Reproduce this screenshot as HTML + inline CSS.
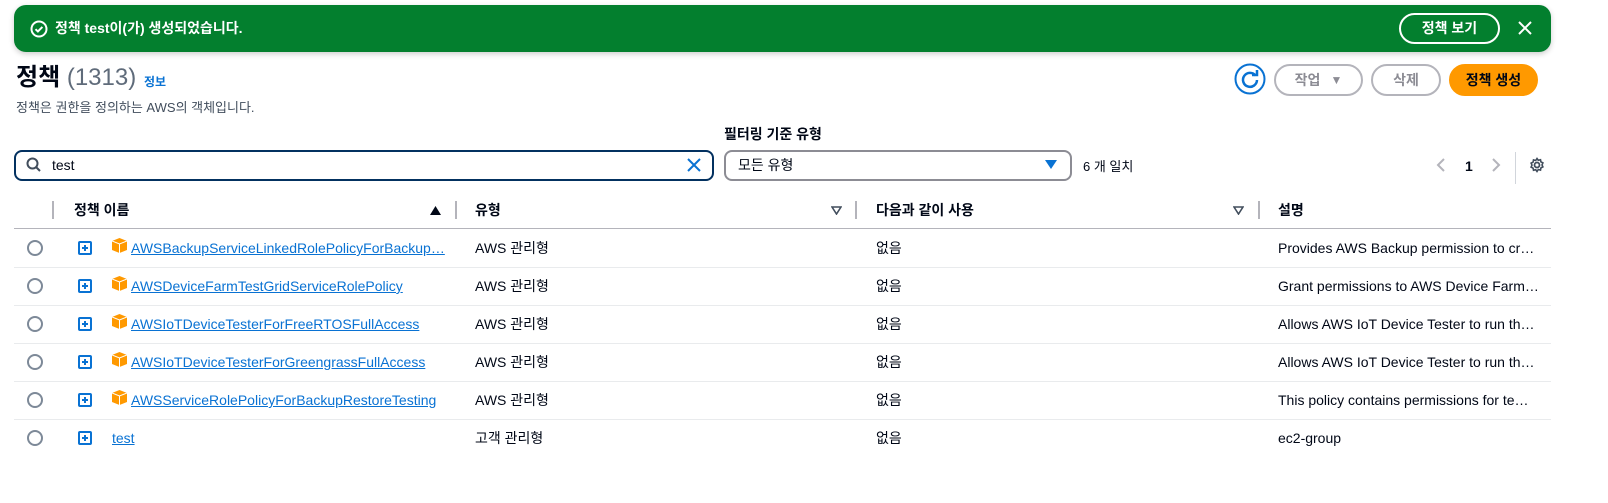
<!DOCTYPE html>
<html><head><meta charset="utf-8"><style>
*{box-sizing:border-box;margin:0;padding:0}
body{width:1608px;height:503px;background:#fff;font-family:"Liberation Sans","Noto Sans CJK KR",sans-serif;color:#000716;font-size:14px;line-height:17px;position:relative;overflow:hidden}
.a{position:absolute}
.flash{left:14px;top:5px;width:1537px;height:47px;background:#037f2e;border-radius:12px;box-shadow:0 2px 6px rgba(0,0,0,.2)}
.btn{position:absolute;border-radius:16px;border:2px solid #b4b4bb;color:#8c8c94;font-weight:bold;display:flex;align-items:center;justify-content:center;font-size:14px}
.hd{position:absolute;top:202px;font-weight:bold;font-size:14px}
.sep{position:absolute;top:201px;width:2px;height:18px;background:#b4b4bb}
.row{position:absolute;left:14px;width:1537px;height:1px;background:#e9ebed}
.rd{position:absolute;left:27px;width:16px;height:16px;border:2px solid #7d8998;border-radius:50%}
.pl{position:absolute;left:78px;width:14px;height:14px;border:2px solid #0972d3;border-radius:2px}
.pl:before{content:"";position:absolute;left:2px;top:4px;width:6px;height:2px;background:#0972d3}
.pl:after{content:"";position:absolute;left:4px;top:2px;width:2px;height:6px;background:#0972d3}
.cube{position:absolute;left:112px;width:15px;height:15px}
.lk{position:absolute;left:131px;color:#0972d3;text-decoration:underline;font-size:14px}
.c{position:absolute;font-size:14px}
</style></head><body>
<div class="a flash"></div>
<svg class="a" style="left:30px;top:20px" width="18" height="18" viewBox="0 0 18 18"><circle cx="9" cy="9" r="7.5" fill="none" stroke="#fff" stroke-width="2"/><path d="M5.5 9.2l2.4 2.3 4.5-4.6" fill="none" stroke="#fff" stroke-width="2"/></svg>
<div class="a" style="left:55px;top:20px;color:#fff;font-weight:bold;font-size:14px">정책 test이(가) 생성되었습니다.</div>
<div class="a" style="left:1399px;top:13px;width:101px;height:31px;border:2px solid #fff;border-radius:16px;color:#fff;font-weight:bold;display:flex;align-items:center;justify-content:center">정책 보기</div>
<svg class="a" style="left:1518px;top:21px" width="14" height="14"><path d="M1 1L13 13M13 1L1 13" stroke="#fff" stroke-width="2"/></svg>

<div class="a" style="left:16px;top:64px;font-size:24px;line-height:28px;font-weight:bold">정책 <span style="font-weight:normal;color:#5f6b7a">(1313)</span></div>
<div class="a" style="left:144px;top:74px;font-size:12px;color:#0972d3;font-weight:bold">정보</div>
<div class="a" style="left:16px;top:99px;font-size:13px;color:#414d5c">정책은 권한을 정의하는 AWS의 객체입니다.</div>

<svg class="a" style="left:1234px;top:63px" width="32" height="32" viewBox="0 0 32 32"><circle cx="16" cy="16" r="14.5" fill="none" stroke="#0972d3" stroke-width="2"/><path d="M21.5 12.5A7 7 0 1 0 23 17" fill="none" stroke="#0972d3" stroke-width="2.5"/><path d="M18 12h5V7" fill="none" stroke="#0972d3" stroke-width="2.5"/></svg>
<div class="btn" style="left:1274px;top:64px;width:89px;height:32px">작업 <span style="font-size:12px;margin-left:10px">▼</span></div>
<div class="btn" style="left:1371px;top:64px;width:70px;height:32px">삭제</div>
<div class="btn" style="left:1449px;top:64px;width:89px;height:32px;background:#ff9900;border-color:#ff9900;color:#000716">정책 생성</div>

<div class="a" style="left:724px;top:126px;font-weight:bold;font-size:14px">필터링 기준 유형</div>
<div class="a" style="left:14px;top:150px;width:700px;height:31px;border:2px solid #033160;border-radius:8px"></div>
<svg class="a" style="left:26px;top:157px" width="16" height="16"><circle cx="6.5" cy="6.5" r="5" fill="none" stroke="#414d5c" stroke-width="2"/><path d="M10 10l4 4" stroke="#414d5c" stroke-width="2"/></svg>
<div class="a" style="left:52px;top:157px">test</div>
<svg class="a" style="left:687px;top:158px" width="14" height="14"><path d="M1 1L13 13M13 1L1 13" stroke="#0972d3" stroke-width="2"/></svg>
<div class="a" style="left:724px;top:150px;width:348px;height:31px;border:2px solid #8c8c94;border-radius:8px"></div>
<div class="a" style="left:738px;top:157px">모든 유형</div>
<svg class="a" style="left:1045px;top:160px" width="12" height="10"><path d="M0 0h12L6 9z" fill="#0972d3"/></svg>
<div class="a" style="left:1083px;top:158px;font-size:13px">6 개 일치</div>
<svg class="a" style="left:1436px;top:157px" width="10" height="16"><path d="M8 2L2 8l6 6" fill="none" stroke="#b4b4bb" stroke-width="2"/></svg>
<div class="a" style="left:1465px;top:158px;font-weight:bold">1</div>
<svg class="a" style="left:1491px;top:157px" width="10" height="16"><path d="M2 2l6 6-6 6" fill="none" stroke="#b4b4bb" stroke-width="2"/></svg>
<div class="a" style="left:1515px;top:152px;width:1px;height:32px;background:#d1d5db"></div>
<svg class="a" style="left:1529px;top:157px" width="16" height="16" viewBox="0 0 16 16"><circle cx="8" cy="8" r="2.5" fill="none" stroke="#414d5c" stroke-width="1.8"/><path d="M8 1.5l1.3 1.8 2.2-.6.4 2.2 2 1-.9 2 .9 2-2 1-.4 2.2-2.2-.6L8 14.5l-1.3-1.8-2.2.6-.4-2.2-2-1 .9-2-.9-2 2-1 .4-2.2 2.2.6z" fill="none" stroke="#414d5c" stroke-width="1.6"/></svg>

<div class="sep" style="left:52px"></div>
<div class="hd" style="left:74px">정책 이름</div>
<svg class="a" style="left:430px;top:206px" width="11" height="9"><path d="M0 9h11L5.5 0z" fill="#000716"/></svg>
<div class="sep" style="left:455px"></div>
<div class="hd" style="left:475px">유형</div>
<svg class="a" style="left:831px;top:206px" width="11" height="9"><path d="M1 1h9L5.5 8z" fill="none" stroke="#414d5c" stroke-width="1.6"/></svg>
<div class="sep" style="left:855px"></div>
<div class="hd" style="left:876px">다음과 같이 사용</div>
<svg class="a" style="left:1233px;top:206px" width="11" height="9"><path d="M1 1h9L5.5 8z" fill="none" stroke="#414d5c" stroke-width="1.6"/></svg>
<div class="sep" style="left:1258px"></div>
<div class="hd" style="left:1278px">설명</div>
<div class="row" style="top:228px;background:#b4b4bb"></div>

<svg width="0" height="0" style="position:absolute"><defs><symbol id="cb" viewBox="0 0 15 15"><path d="M7.5 0L15 3v9l-7.5 3L0 12V3z" fill="#ff9900"/><path d="M0 3l7.5 3 7.5-3M7.5 6v9" stroke="#fff" stroke-width="1" fill="none"/></symbol></defs></svg>

<div class="rd" style="top:240px"></div><div class="pl" style="top:241px"></div><svg class="cube" style="top:238px"><use href="#cb"/></svg>
<div class="lk" style="top:240px">AWSBackupServiceLinkedRolePolicyForBackup…</div>
<div class="c" style="left:475px;top:240px">AWS 관리형</div><div class="c" style="left:876px;top:240px">없음</div><div class="c" style="left:1278px;top:240px">Provides AWS Backup permission to cr…</div>
<div class="row" style="top:267px"></div>

<div class="rd" style="top:278px"></div><div class="pl" style="top:279px"></div><svg class="cube" style="top:276px"><use href="#cb"/></svg>
<div class="lk" style="top:278px">AWSDeviceFarmTestGridServiceRolePolicy</div>
<div class="c" style="left:475px;top:278px">AWS 관리형</div><div class="c" style="left:876px;top:278px">없음</div><div class="c" style="left:1278px;top:278px">Grant permissions to AWS Device Farm…</div>
<div class="row" style="top:305px"></div>

<div class="rd" style="top:316px"></div><div class="pl" style="top:317px"></div><svg class="cube" style="top:314px"><use href="#cb"/></svg>
<div class="lk" style="top:316px">AWSIoTDeviceTesterForFreeRTOSFullAccess</div>
<div class="c" style="left:475px;top:316px">AWS 관리형</div><div class="c" style="left:876px;top:316px">없음</div><div class="c" style="left:1278px;top:316px">Allows AWS IoT Device Tester to run th…</div>
<div class="row" style="top:343px"></div>

<div class="rd" style="top:354px"></div><div class="pl" style="top:355px"></div><svg class="cube" style="top:352px"><use href="#cb"/></svg>
<div class="lk" style="top:354px">AWSIoTDeviceTesterForGreengrassFullAccess</div>
<div class="c" style="left:475px;top:354px">AWS 관리형</div><div class="c" style="left:876px;top:354px">없음</div><div class="c" style="left:1278px;top:354px">Allows AWS IoT Device Tester to run th…</div>
<div class="row" style="top:381px"></div>

<div class="rd" style="top:392px"></div><div class="pl" style="top:393px"></div><svg class="cube" style="top:390px"><use href="#cb"/></svg>
<div class="lk" style="top:392px">AWSServiceRolePolicyForBackupRestoreTesting</div>
<div class="c" style="left:475px;top:392px">AWS 관리형</div><div class="c" style="left:876px;top:392px">없음</div><div class="c" style="left:1278px;top:392px">This policy contains permissions for te…</div>
<div class="row" style="top:419px"></div>

<div class="rd" style="top:430px"></div><div class="pl" style="top:431px"></div>
<div class="lk" style="top:430px;left:112px">test</div>
<div class="c" style="left:475px;top:430px">고객 관리형</div><div class="c" style="left:876px;top:430px">없음</div><div class="c" style="left:1278px;top:430px">ec2-group</div>
</body></html>
